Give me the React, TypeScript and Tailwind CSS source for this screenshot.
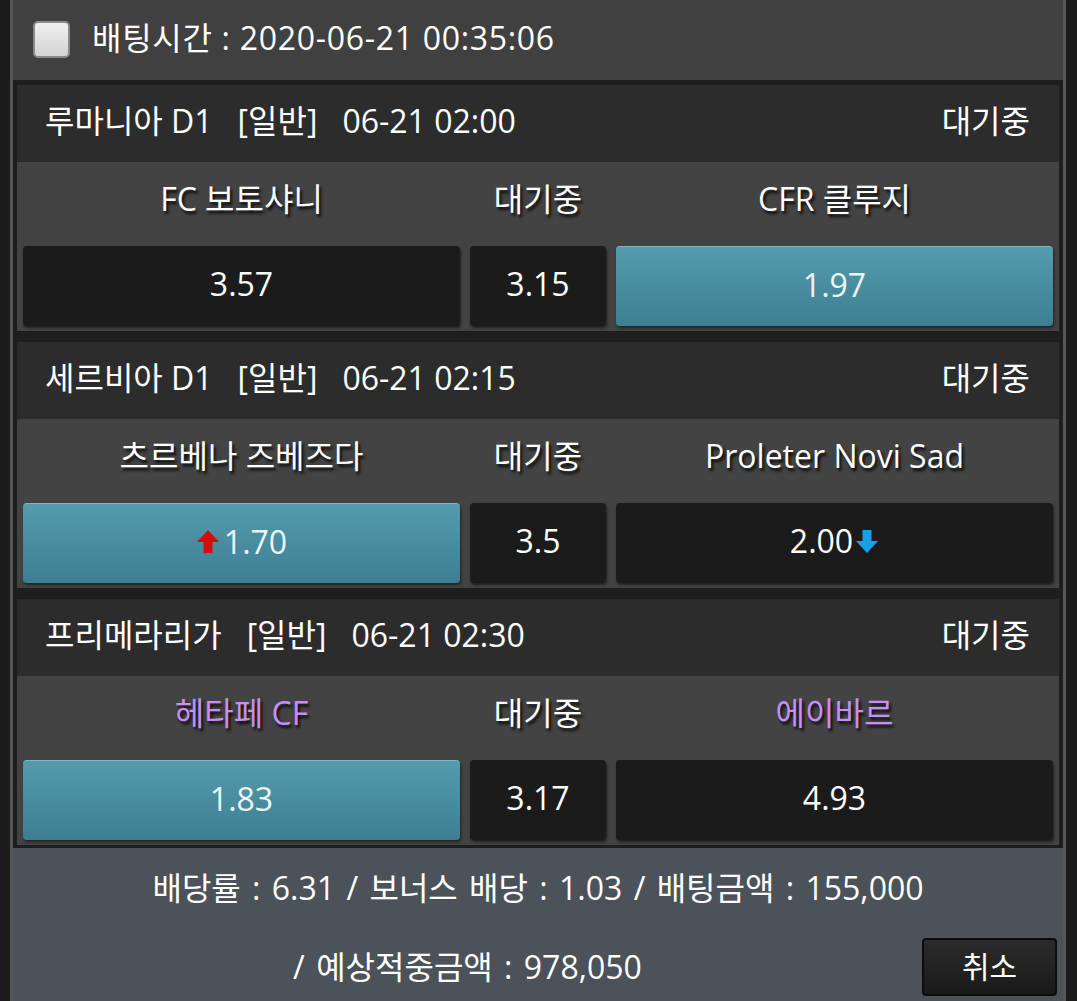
import React from 'react';

type Pick = 'home' | 'draw' | 'away' | null;

interface Match {
  league: string;
  time: string;
  home: string;
  away: string;
  odds: [string, string, string];
  picked: Pick;
  purple?: boolean;
  homeUp?: boolean;
  awayDown?: boolean;
}

const MATCHES: Match[] = [
  { league: '루마니아 D1', time: '06-21 02:00', home: 'FC 보토샤니', away: 'CFR 클루지', odds: ['3.57', '3.15', '1.97'], picked: 'away' },
  {
    league: '세르비아 D1',
    time: '06-21 02:15',
    home: '츠르베나 즈베즈다',
    away: 'Proleter Novi Sad',
    odds: ['1.70', '3.5', '2.00'],
    picked: 'home',
    homeUp: true,
    awayDown: true,
  },
  { league: '프리메라리가', time: '06-21 02:30', home: '헤타페 CF', away: '에이바르', odds: ['1.83', '3.17', '4.93'], picked: 'home', purple: true },
];

// latin glyphs from Open Sans (droid-like), hangul falls through to Noto CJK
const FONT = "font-['Open_Sans','Noto_Sans_CJK_KR',sans-serif]";

const UpArrow = () => (
  <svg width="24" height="25" viewBox="0 0 24 25" className="mr-[4px]">
    <path d="M12 1 L23 13 L16.5 13 L16.5 24 L7.5 24 L7.5 13 L1 13 Z" fill="#d20d0d" />
  </svg>
);

const DownArrow = () => (
  <svg width="24" height="25" viewBox="0 0 24 25" className="ml-[2px]">
    <path d="M12 24 L23 12 L16.5 12 L16.5 1 L7.5 1 L7.5 12 L1 12 Z" fill="#1a9ee8" />
  </svg>
);

const OddsBox: React.FC<{ value: string; active: boolean; up?: boolean; down?: boolean }> = ({ value, active, up, down }) => (
  <div
    className={
      active
        ? 'flex h-[80px] items-center justify-center rounded-[4px] border-t border-[#7fb8c6] bg-gradient-to-b from-[#559bad] to-[#3d7e93] pb-[4px] text-[#eaf6fa] shadow-[1px_2px_3px_rgba(0,0,0,0.5)]'
        : 'flex h-[80px] items-center justify-center rounded-[4px] bg-[#1b1b1b] pb-[4px] text-white shadow-[1px_2px_3px_rgba(0,0,0,0.55)]'
    }
  >
    {up && <UpArrow />}
    <span className="text-[32px] leading-none">{value}</span>
    {down && <DownArrow />}
  </div>
);

const MatchCard: React.FC<{ m: Match }> = ({ m }) => {
  const nameColor = m.purple ? 'text-[#c88ef3]' : 'text-white';
  return (
    <div className="bg-[#434343]">
      <div className="flex h-[77px] items-center justify-between bg-[#2c2c2c] pb-[5px] pl-[28px] pr-[29px] text-[32px] leading-none text-white">
        <div className="flex items-center gap-[25px]">
          <span>{m.league}</span>
          <span>[일반]</span>
          <span>{m.time}</span>
        </div>
        <span>대기중</span>
      </div>
      <div className="grid h-[83px] grid-cols-[1fr_136px_1fr] items-center gap-x-[10px] px-[6px] pb-[10px] text-center text-[32px] leading-none [text-shadow:2px_3px_3px_rgba(0,0,0,0.85)]">
        <span className={nameColor}>{m.home}</span>
        <span className="text-white">대기중</span>
        <span className={nameColor}>{m.away}</span>
      </div>
      <div className="grid grid-cols-[1fr_136px_1fr] gap-x-[10px] px-[6px] pb-[5px] pt-[1px]">
        <OddsBox value={m.odds[0]} active={m.picked === 'home'} up={m.homeUp} />
        <OddsBox value={m.odds[1]} active={m.picked === 'draw'} />
        <OddsBox value={m.odds[2]} active={m.picked === 'away'} down={m.awayDown} />
      </div>
    </div>
  );
};

export default function App() {
  return (
    <div className={`min-h-[1001px] w-[1077px] overflow-hidden bg-[#1c1c1c] ${FONT}`}>
      <div className="ml-[10px] w-[1056px] border-x-[3px] border-[#565656]">
        <div className="flex h-[80px] items-center gap-[22px] bg-[#404040] pb-[5px] pl-[20px]">
          <div className="mt-[3px] h-[37px] w-[37px] rounded-[5px] border-2 border-[#8a8a8a] bg-gradient-to-b from-[#f0f0f0] to-[#d4d4d4]" />
          <span className="text-[32px] leading-none tracking-[0.7px] text-white">배팅시간 : 2020-06-21 00:35:06</span>
        </div>
        <div className="flex flex-col gap-[11px] bg-[#1e1e1e] px-[4px] pb-[3px] pt-[5px]">
          {MATCHES.map((m) => (
            <MatchCard key={m.league} m={m} />
          ))}
        </div>
        <div className="h-[160px] bg-[#4b5259] text-white">
          <div className="pt-[20px] text-center text-[32px] leading-[40px] [word-spacing:3px]">
            배당률 : 6.31 / 보너스 배당 : 1.03 / 배팅금액 : 155,000
          </div>
          <div className="mt-[30px] flex items-center pr-[6px]">
            <div className="flex-1 text-center text-[32px] leading-none [word-spacing:3px]">/ 예상적중금액 : 978,050</div>
            <button className="flex h-[58px] w-[135px] items-center justify-center rounded-[4px] border-2 border-[#0d0d0d] bg-gradient-to-b from-[#2b2b2b] to-[#1a1a1a] text-[30px] leading-none text-white">
              취소
            </button>
          </div>
        </div>
      </div>
    </div>
  );
}
